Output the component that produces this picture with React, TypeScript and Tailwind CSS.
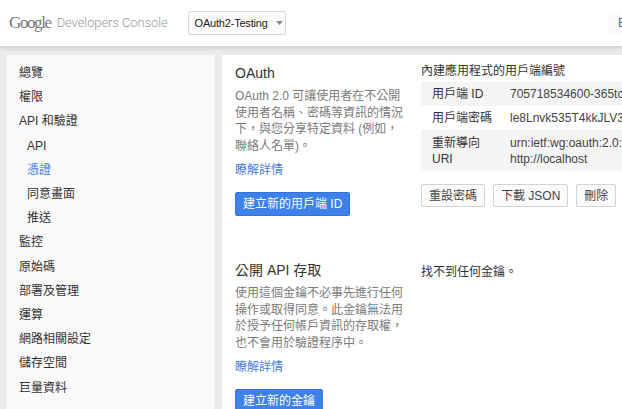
const FONT = "font-['Liberation_Sans','Noto_Sans_CJK_TC',sans-serif]";

const navItems = [
  { label: "總覽" },
  { label: "權限" },
  { label: "API 和驗證" },
  { label: "API", sub: true },
  { label: "憑證", sub: true, active: true },
  { label: "同意畫面", sub: true },
  { label: "推送", sub: true },
  { label: "監控" },
  { label: "原始碼" },
  { label: "部署及管理" },
  { label: "運算" },
  { label: "網路相關設定" },
  { label: "儲存空間" },
  { label: "巨量資料" },
];

function Header() {
  return (
    <div className="relative z-10 flex h-[46px] shrink-0 items-center bg-white pl-[9px] shadow-[0_2px_5px_rgba(0,0,0,0.14)]">
      <span className="font-['Liberation_Serif',serif] text-[17px] tracking-[-1.4px] text-[#777]">
        Google
      </span>
      <span className="ml-[6px] font-['Roboto',sans-serif] text-[13px] font-light tracking-[-0.1px] text-[#9a9a9a]">
        Developers Console
      </span>
      <div className="ml-[20px] flex h-[24px] w-[98px] items-center rounded-[2px] border border-[#d8d8d8] bg-[#fbfbfb] pl-[6px]">
        <span className="text-[11px] tracking-[-0.2px] text-[#222]">OAuth2-Testing</span>
        <svg className="ml-[8px]" width="7" height="4" viewBox="0 0 7 4">
          <path d="M0 0h7L3.5 4z" fill="#888" />
        </svg>
      </div>
      <div className="ml-auto flex h-[22px] w-[14px] items-center bg-[#fafafa] pl-[10px] text-[12px] text-[#4a6fa8]">
        E
      </div>
    </div>
  );
}

function Sidebar() {
  return (
    <div className="w-[208px] shrink-0 bg-[#f9f9f9] pt-[6px]">
      {navItems.map((item) => (
        <div
          key={item.label}
          className={`flex h-[24.2px] items-center text-[12px] ${item.sub ? "pl-[20px]" : "pl-[12px]"} ${
            item.active ? "text-[#4a80de]" : "text-[#333]"
          }`}
        >
          {item.label}
        </div>
      ))}
    </div>
  );
}

function BlueButton({ children }: { children: React.ReactNode }) {
  return (
    <div className="inline-flex h-6 items-center rounded-[2px] border border-[#3571d6] bg-[#3f81ea] px-[7px] text-[12px] text-white">
      {children}
    </div>
  );
}

function GrayButton({ children }: { children: React.ReactNode }) {
  return (
    <div className="flex h-[23px] items-center rounded-[2px] border border-[#d3d3d3] bg-[#fbfbfb] px-[7px] text-[12px] text-[#444]">
      {children}
    </div>
  );
}

function Section({
  title,
  lines,
  button,
  right,
}: {
  title: string;
  lines: string[];
  button: string;
  right: React.ReactNode;
}) {
  return (
    <div className="flex gap-[11px]">
      <div className="w-[175px] shrink-0">
        <div className="text-[14px] leading-5 text-[#333]">{title}</div>
        <div className="mt-[5px] text-[12px] leading-[16.5px] text-[#7a7a7a]">
          {lines.map((l) => (
            <div key={l} className="whitespace-nowrap">
              {l}
            </div>
          ))}
        </div>
        <div className="mt-[8px] text-[12px] leading-4 text-[#4a80de]">瞭解詳情</div>
        <div className="mt-[13px]">
          <BlueButton>{button}</BlueButton>
        </div>
      </div>
      <div className="min-w-0 flex-1">{right}</div>
    </div>
  );
}

function ClientTable() {
  return (
    <div className="-mt-[1px]">
      <div className="text-[12px] leading-[18px] text-[#333]">內建應用程式的用戶端編號</div>
      <div className="mt-[2px] text-[12px] text-[#333]">
        <div className="flex h-6 items-center bg-[#f5f5f5]">
          <div className="w-[89px] shrink-0 pl-[11px]">用戶端 ID</div>
          <div className="whitespace-nowrap text-[#444]">705718534600-365tcq8r2v7h.apps.googleusercontent.com</div>
        </div>
        <div className="flex h-6 items-center">
          <div className="w-[89px] shrink-0 pl-[11px]">用戶端密碼</div>
          <div className="whitespace-nowrap text-[#444]">le8Lnvk535T4kkJLV3xQ</div>
        </div>
        <div className="flex h-[41px] items-center bg-[#f5f5f5] leading-[16px]">
          <div className="w-[89px] shrink-0 pl-[11px]">
            重新導向
            <br />
            URI
          </div>
          <div className="whitespace-nowrap text-[#444]">
            urn:ietf:wg:oauth:2.0:oob
            <br />
            http://localhost
          </div>
        </div>
      </div>
      <div className="mt-[13px] flex gap-[8px]">
        <GrayButton>重設密碼</GrayButton>
        <GrayButton>下載 JSON</GrayButton>
        <GrayButton>刪除</GrayButton>
      </div>
    </div>
  );
}

export default function App() {
  return (
    <div className={`flex h-[409px] w-[622px] flex-col overflow-hidden bg-[#ebebeb] ${FONT}`}>
      <Header />
      <div className="flex flex-1 gap-[7px] pl-[7px] pt-[9px]">
        <Sidebar />
        <div className="w-[560px] shrink-0 bg-white pl-[13px] pt-[8px]">
          <Section
            title="OAuth"
            lines={[
              "OAuth 2.0 可讓使用者在不公開",
              "使用者名稱、密碼等資訊的情況",
              "下，與您分享特定資料 (例如，",
              "聯絡人名單)。",
            ]}
            button="建立新的用戶端 ID"
            right={<ClientTable />}
          />
          <div className="mt-[44px]">
            <Section
              title="公開 API 存取"
              lines={[
                "使用這個金鑰不必事先進行任何",
                "操作或取得同意。此金鑰無法用",
                "於授予任何帳戶資訊的存取權，",
                "也不會用於驗證程序中。",
              ]}
              button="建立新的金鑰"
              right={<div className="pt-[3px] text-[12px] leading-[18px] text-[#333]">找不到任何金鑰。</div>}
            />
          </div>
        </div>
      </div>
    </div>
  );
}
